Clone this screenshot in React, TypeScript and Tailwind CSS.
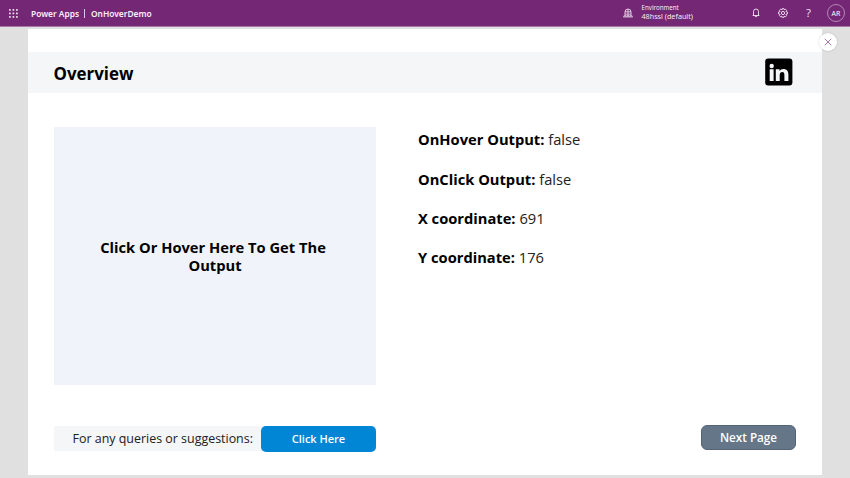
import React from 'react';

function WaffleIcon() {
  return (
    <svg className="h-[9px] w-[9px]" viewBox="0 0 9 9" fill="#f0e2f0">
      {[0, 3.5, 7].map((y) =>
        [0, 3.5, 7].map((x) => <rect key={`${x}-${y}`} x={x} y={y} width="1.8" height="1.8" rx="0.6" />),
      )}
    </svg>
  );
}

function EnvironmentIcon() {
  return (
    <svg className="h-[10px] w-[10px]" viewBox="0 0 10 10" fill="none" stroke="#ead6ea" strokeWidth="0.9">
      <path d="M2 6.200V4a3 3 0 0 1 6 0v2.200M2 3.800h6M5 1v5.200M1.500 6.200h7" />
      <path d="M.3 8.900h9.400M.7 8.800l.6-1.400h1.500v1.400M7.200 8.800V7.400h1.500l.6 1.400M4.200 8.800V7.500h1.600v1.300" />
    </svg>
  );
}

function BellIcon() {
  return (
    <svg className="h-[10px] w-[8px]" viewBox="0 0 8 10" fill="none" stroke="#f3e8f3" strokeWidth="0.9">
      <path d="M0.600 7.500H7.400M1.500 7.400V3.700a2.500 2.700 0 0 1 5 0v3.700M3 7.800a1 1 0 0 0 2 0" />
    </svg>
  );
}

function GearIcon() {
  return (
    <svg className="h-[10px] w-[10px]" viewBox="0 0 10 10" fill="none" stroke="#f3e8f3" strokeWidth="0.9">
      <path d="M4.200 0.600h1.600l.3 1.200 1.200-.7 1.300 1.300-.7 1.200 1.500.4v2l-1.500.4.7 1.200-1.300 1.300-1.200-.7-.3 1.200H4.200l-.3-1.200-1.200.7-1.300-1.300.7-1.200L.6 6V4l1.500-.4-.7-1.200 1.300-1.300 1.200.7z" />
      <circle cx="5" cy="5" r="1.600" />
    </svg>
  );
}

function LinkedInIcon() {
  return (
    <svg className="mb-[2px] h-[28px] w-[28px]" viewBox="0 0 28 28">
      <rect x="0.200" y="0.400" width="27.200" height="27.200" rx="3" fill="#000" />
      <g fill="#f4f6f8">
        <circle cx="6.700" cy="8" r="2.200" />
        <path d="M4.700 11.300h3.900V23H4.700zM10.800 11.300h3.700v1.600c.8-1.300 2.100-2 3.700-2 3.600 0 5.200 2.100 5.200 5.500V23h-4v-6c0-1.900-.6-2.900-2-2.900-1.800 0-2.700 1.100-2.700 2.900v6h-3.900z" />
      </g>
    </svg>
  );
}

function TopBar() {
  return (
    <header className="flex h-[27px] shrink-0 items-center border-b border-[#a878a7] bg-[#742774] font-['Noto_Sans','Open_Sans',sans-serif] text-white">
      <div className="ml-[9px] flex w-[22px]"><WaffleIcon /></div>
      <div className="flex items-center whitespace-nowrap pt-px text-[8.4px] font-semibold leading-3 text-[#f8effa]">
        <span className="w-[48px]">Power Apps</span>
        <span className="ml-[5px] mr-[6px] h-[9px] w-px bg-[#d8c9e6]" />
        <span>OnHoverDemo</span>
      </div>
      <div className="ml-auto flex h-full w-[227px] shrink-0 items-center">
        <div className="flex w-[18.500px]"><EnvironmentIcon /></div>
        <div className="mb-[2px] flex w-[110.500px] flex-col whitespace-nowrap text-[#f5e9f5]">
          <span className="text-[6.200px] leading-[8px]">Environment</span>
          <span className="text-[7.200px] leading-[9px]">48hssl (default)</span>
        </div>
        <div className="flex w-[26px]"><BellIcon /></div>
        <div className="flex w-[28px]"><GearIcon /></div>
        <span className="w-[21px] text-[11.500px] leading-4 text-[#ead6ea]">?</span>
        <span className="flex h-[18px] w-[18px] shrink-0 items-center justify-center rounded-full border border-[#b587b5] pt-px text-[7px] leading-none">AR</span>
      </div>
    </header>
  );
}

const outputs = [
  ['OnHover Output:', 'false'],
  ['OnClick Output:', 'false'],
  ['X coordinate:', '691'],
  ['Y coordinate:', '176'],
];

export default function App() {
  return (
    <div className="relative flex h-[478px] w-[850px] flex-col overflow-hidden bg-[#e0e0e0] font-['Open_Sans',sans-serif] text-black">
      <TopBar />
      <main className="ml-[28px] mt-[2px] flex h-[446px] w-[794px] flex-col bg-white pt-[23px]">
        <div className="flex h-[41px] shrink-0 items-center justify-between bg-[#f4f6f8] pl-[25.500px] pr-[29px]">
          <h1 className="pt-[2px] text-[16.900px] font-bold leading-6">Overview</h1>
          <LinkedInIcon />
        </div>
        <section className="flex pl-[26px] pt-[34px]">
          <button className="flex h-[257.500px] w-[322px] items-center justify-center bg-[#f0f3f9] text-center text-[14.700px] font-bold leading-[18px]">
            <span className="w-[244px]"><span className="mr-[4px]">Click Or Hover Here To Get The</span> Output</span>
          </button>
          <div className="ml-[42px] flex flex-col gap-[19.300px] pt-[2.400px] text-[14.700px] leading-5">
            {outputs.map(([label, value]) => (
              <p key={label} className="whitespace-nowrap"><b>{label}</b> <span className="text-[#222]">{value}</span></p>
            ))}
          </div>
        </section>
        <footer className="flex items-start justify-between pl-[26px] pr-[26px] pt-[40.500px]">
          <div className="mt-px flex h-[25px] w-[322px] items-center bg-[#f4f6f8]">
            <span className="w-[207px] whitespace-nowrap pl-[18.500px] pt-px text-[12.450px] text-[#202020]">For any queries or suggestions:</span>
            <button className="h-[26px] w-[115px] shrink-0 rounded-[5px] bg-[#0086d5] pt-px text-[11px] font-semibold text-white">Click Here</button>
          </div>
          <button className="h-[25px] w-[95px] rounded-[6px] border border-[#536575] bg-[#647687] pt-px text-[11.700px] font-semibold text-white">Next Page</button>
        </footer>
      </main>
      <button aria-label="Close" className="absolute left-[818.500px] top-[33px] flex h-[18px] w-[18px] items-center justify-center rounded-full bg-white shadow-[0_0_2px_rgba(0,0,0,0.2)]">
        <svg className="h-[8px] w-[8px]" viewBox="0 0 8 8" stroke="#a06b9f" strokeWidth="0.9"><path d="M.8.8l6.400 6.400M7.200.8L.8 7.200" /></svg>
      </button>
    </div>
  );
}
